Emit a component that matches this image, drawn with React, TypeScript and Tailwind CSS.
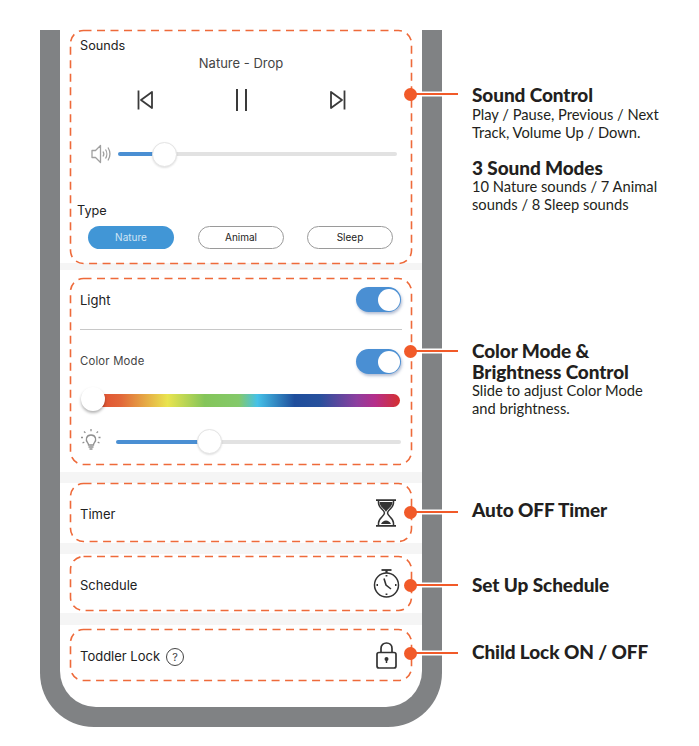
import type { ReactNode } from "react";

const sans = "font-['Inter','Liberation_Sans',sans-serif]";

function Band({ className }: { className: string }) {
  return <div className={`bg-[#f5f5f5] ${className}`} />;
}

function DashBox({
  className,
  dotTop,
  children,
}: {
  className: string;
  dotTop: number;
  children: ReactNode;
}) {
  return (
    <div className={`relative ml-[10px] w-[341px] ${className}`}>
      <svg className="absolute inset-0 h-full w-full overflow-visible" fill="none">
        <rect
          x="0.5"
          y="0.5"
          width="100%"
          height="100%"
          rx="13"
          stroke="#ee6a3a"
          strokeWidth="1.6"
          strokeDasharray="8 5.5"
        />
      </svg>
      <div
        className="absolute left-[334px] z-10 flex h-[14px] items-center"
        style={{ top: dotTop }}
      >
        <div className="relative z-10 h-[13px] w-[13px] rounded-full bg-[#f15a29]" />
        <div className="-ml-px h-[2px] w-[42px] bg-[#f15a29] shadow-[0_0_0_1.5px_#fff]" />
      </div>
      {children}
    </div>
  );
}

function Toggle() {
  return (
    <div className="flex h-[25px] w-[45px] items-center justify-end rounded-full bg-[#4a8fd3] pr-px shadow-[1px_2px_3px_rgba(40,70,130,0.35)]">
      <div className="h-[22px] w-[22px] rounded-full bg-white" />
    </div>
  );
}

function Thumb({ className = "" }: { className?: string }) {
  return (
    <div
      className={`h-[25px] w-[25px] shrink-0 rounded-full border border-[#e4e4e4] bg-white shadow-[0_1px_2px_rgba(0,0,0,0.12)] ${className}`}
    />
  );
}

function Slider({ fill, className }: { fill: number; className: string }) {
  return (
    <div className={`flex items-center ${className}`}>
      <div className="h-[4px] rounded-l-full bg-[#4a8fd3]" style={{ width: fill }} />
      <Thumb className="-mx-[1px] relative" />
      <div className="h-[4px] flex-1 rounded-r-full bg-[#e2e2e2]" />
    </div>
  );
}

function Pill({ label, active }: { label: string; active?: boolean }) {
  return (
    <div
      className={`flex h-[23px] w-[86px] items-center justify-center rounded-full text-[10px] ${
        active
          ? "bg-[#4196d6] text-[#cfe4f5]"
          : "border border-[#9a9a9a] bg-white text-[#222]"
      }`}
    >
      {label}
    </div>
  );
}

function Callout({
  className = "",
  title,
  lines,
  linesClass = "",
}: {
  className?: string;
  title: string[];
  lines: string[];
  linesClass?: string;
}) {
  return (
    <div className={className}>
      <div className="flex flex-col gap-[3px]">
        {title.map((t) => (
          <div
            key={t}
            className="h-[18px] font-['Lato',sans-serif] text-[19px] font-black leading-[18px] tracking-[-0.1px] whitespace-nowrap text-[#231f20]"
          >
            {t}
          </div>
        ))}
      </div>
      <div className={linesClass}>
        {lines.map((l) => (
          <div
            key={l}
            className="h-[18px] font-['Lato',sans-serif] text-[14.7px] leading-[18px] whitespace-nowrap text-[#231f20]"
          >
            {l}
          </div>
        ))}
      </div>
    </div>
  );
}

export default function App() {
  return (
    <div className={`flex h-[746px] w-[699px] overflow-hidden bg-white pl-[40px] pt-[30px] ${sans}`}>
      {/* phone */}
      <div className="h-[697px] w-[402px] shrink-0 rounded-b-[54px] bg-[#808284] px-[20px] pb-[20px]">
        <div className="flex h-full flex-col rounded-b-[36px] bg-white">
          <DashBox className="h-[233px] shrink-0" dotTop={57}>
            <div className="flex h-full flex-col pt-[8px]">
              <div className="flex h-[16px] items-center pl-[10px] text-[12.7px] text-[#222]">Sounds</div>
              <div className="mt-[2px] flex h-[16px] items-center justify-center pl-[1px] text-[13px] text-[#444]">
                Nature - Drop
              </div>
              <div className="mt-[17px] flex h-[22px] items-center pl-[67px]">
                <svg width="16" height="20" viewBox="0 0 16 20" fill="none" stroke="#3a3a3a" strokeWidth="1.8">
                  <path d="M1.5 0.5V19.5" />
                  <path d="M15 2L4 10L15 18Z" strokeLinejoin="round" />
                </svg>
                <div className="ml-[83px] flex h-[22px] w-[11px] justify-between">
                  <div className="w-[2px] bg-[#3a3a3a]" />
                  <div className="w-[2px] bg-[#3a3a3a]" />
                </div>
                <svg className="ml-[83px]" width="16" height="20" viewBox="0 0 16 20" fill="none" stroke="#3a3a3a" strokeWidth="1.8">
                  <path d="M14.5 0.5V19.5" />
                  <path d="M1 2L12 10L1 18Z" strokeLinejoin="round" />
                </svg>
              </div>
              <div className="mt-[31px] flex h-[24px] items-center pl-[21px]">
                <svg width="20" height="20" viewBox="0 0 20 20" fill="none" stroke="#a0a0a0" strokeWidth="1.3">
                  <path d="M1 6.5H4.5L9.5 1.5V18.5L4.5 13.5H1Z" strokeLinejoin="round" />
                  <path d="M12 7.5C13 9 13 11 12 12.5" />
                  <path d="M14.5 5.5C16.2 8 16.2 12 14.5 14.5" />
                  <path d="M17 3.5C19.4 7.5 19.4 12.5 17 16.5" />
                </svg>
                <Slider fill={35} className="ml-[7px] w-[279px]" />
              </div>
              <div className="mt-[37px] flex h-[16px] items-center pl-[7px] text-[12.7px] text-[#222]">Type</div>
              <div className="mt-[7px] flex pl-[18px]">
                <Pill label="Nature" active />
                <div className="w-[24px]" />
                <Pill label="Animal" />
                <div className="w-[23px]" />
                <Pill label="Sleep" />
              </div>
            </div>
          </DashBox>
          <Band className="h-[7px] shrink-0" />
          <DashBox className="mt-[8px] h-[186px] shrink-0" dotTop={66}>
            <div className="flex h-full flex-col px-[10px] pt-[9px]">
              <div className="flex h-[25px] items-center justify-between">
                <span className="mt-[2px] text-[13px] text-[#222]">Light</span>
                <Toggle />
              </div>
              <div className="mt-[17px] h-px w-[322px] bg-[#c8c8c8]" />
              <div className="mt-[19px] flex h-[25px] items-center justify-between">
                <span className="text-[11.3px] tracking-[0.2px] text-[#444]">Color Mode</span>
                <Toggle />
              </div>
              <div className="relative mt-[13px] h-[25px] w-[320px]">
                <div className="absolute left-[10px] right-0 top-[7px] h-[13px] rounded-r-full bg-[linear-gradient(90deg,#e0452f_0%,#e2683a_10%,#e9e44f_25%,#84c55a_37%,#84c96a_48%,#45c1e8_54%,#1f4e9c_66%,#27509c_74%,#8d3f9f_86%,#b52e8a_92%,#d5302f_100%)]" />
                <div className="absolute left-[1px] top-0 h-[24px] w-[24px] rounded-full bg-white shadow-[0_2px_3px_rgba(0,0,0,0.3)]" />
              </div>
              <div className="mt-[17px] flex h-[25px] items-center">
                <svg className="-mt-[5px]" width="22" height="22" viewBox="0 0 22 22" fill="none" stroke="#909090" strokeWidth="1.3">
                  <path d="M7.5 14.5C5.5 12.5 5.8 7 11 7C16.2 7 16.5 12.5 14.5 14.5C13.6 15.5 13.5 16 13.5 17H8.5C8.5 16 8.4 15.5 7.5 14.5Z" />
                  <path d="M8.5 19H13.5M9.5 21H12.5" />
                  <path d="M11 1V4M4 3.5L6 5.5M18 3.5L16 5.5M1 9.5H3.5M18.5 9.5H21M2.5 15L4.5 14M19.5 15L17.5 14" strokeDasharray="2 0.8" />
                </svg>
                <Slider fill={82} className="ml-[14px] w-[285px]" />
              </div>
            </div>
          </DashBox>
          <Band className="mt-[8px] h-[11px] shrink-0" />
          <DashBox className="h-[58px] shrink-0" dotTop={22}>
            <div className="flex h-full items-center justify-between pl-[10px] pr-[14px]">
              <span className="mt-[5px] text-[13px] text-[#222]">Timer</span>
              <svg className="mt-[2px]" width="22" height="28" viewBox="0 0 22 28" fill="none" stroke="#333" strokeWidth="1.5">
                <path d="M1 1.2H21M1 26.8H21" strokeWidth="1.8" />
                <path d="M3.5 1.5V4C3.5 9 9.5 11 9.5 14C9.5 17 3.5 19 3.5 24V26.5M18.5 1.5V4C18.5 9 12.5 11 12.5 14C12.5 17 18.5 19 18.5 24V26.5" />
                <path d="M4.5 3H17.5C17.5 8 12 10 11 13C10 10 4.5 8 4.5 3Z" fill="#333" stroke="none" />
                <path d="M6 25C7 23 9 21.5 11 21.5C13 21.5 15 23 16 25Z" fill="#333" stroke="none" />
              </svg>
            </div>
          </DashBox>
          <div className="h-[2px] shrink-0" />
          <Band className="h-[11px] shrink-0" />
          <DashBox className="mt-[2px] h-[54px] shrink-0" dotTop={22}>
            <div className="flex h-full items-center justify-between pl-[10px] pr-[11px]">
              <span className="mt-[5px] text-[13px] text-[#222]">Schedule</span>
              <svg width="27" height="29" viewBox="0 0 27 29" fill="none" stroke="#333" strokeWidth="1.5">
                <circle cx="13.5" cy="16" r="12" />
                <path d="M8.5 1H18.5" strokeWidth="1.8" />
                <path d="M13.5 1V4" strokeWidth="2.2" />
                <path d="M11 9.5L13 16L18 20" strokeWidth="1.6" />
                <path d="M13.5 6V7.5M13.5 24.5V26M3.5 16H5M22 16H23.5" strokeWidth="1.8" />
              </svg>
            </div>
          </DashBox>
          <div className="h-[3px] shrink-0" />
          <Band className="h-[12px] shrink-0" />
          <DashBox className="mt-[4px] h-[51px] shrink-0" dotTop={17}>
            <div className="flex h-full items-center pl-[10px] pr-[14px]">
              <div className="mt-[5px] flex items-center">
                <span className="text-[13px] text-[#222]">Toddler Lock</span>
                <div className="ml-[6px] flex h-[18px] w-[18px] items-center justify-center rounded-full border border-[#444] text-[11px] text-[#444]">
                  ?
                </div>
              </div>
              <svg className="mt-[2px] ml-auto" width="21" height="27" viewBox="0 0 21 27" fill="none" stroke="#333" strokeWidth="1.7">
                <path d="M5 11V6.5C5 3 7.5 1 10.5 1C13.5 1 16 3 16 6.5V11" />
                <rect x="1" y="10.5" width="19" height="15.5" rx="2" />
                <circle cx="10.5" cy="17" r="2" fill="#333" stroke="none" />
                <path d="M10.5 17V21" strokeWidth="1.5" />
              </svg>
            </div>
          </DashBox>
        </div>
      </div>

      {/* notes */}
      <div className="ml-[30px] flex flex-col">
        <Callout
          className="mt-[56px]"
          title={["Sound Control"]}
          lines={["Play / Pause, Previous / Next", "Track, Volume Up / Down."]}
          linesClass="mt-px"
        />
        <Callout
          className="mt-[18px]"
          title={["3 Sound Modes"]}
          lines={["10 Nature sounds / 7 Animal", "sounds / 8 Sleep sounds"]}
        />
        <Callout
          className="mt-[129px]"
          title={["Color Mode &", "Brightness Control"]}
          lines={["Slide to adjust Color Mode", "and brightness."]}
        />
        <Callout className="mt-[84px]" title={["Auto OFF Timer"]} lines={[]} />
        <Callout className="mt-[57px]" title={["Set Up Schedule"]} lines={[]} />
        <Callout className="mt-[49px]" title={["Child Lock ON / OFF"]} lines={[]} />
      </div>
    </div>
  );
}
